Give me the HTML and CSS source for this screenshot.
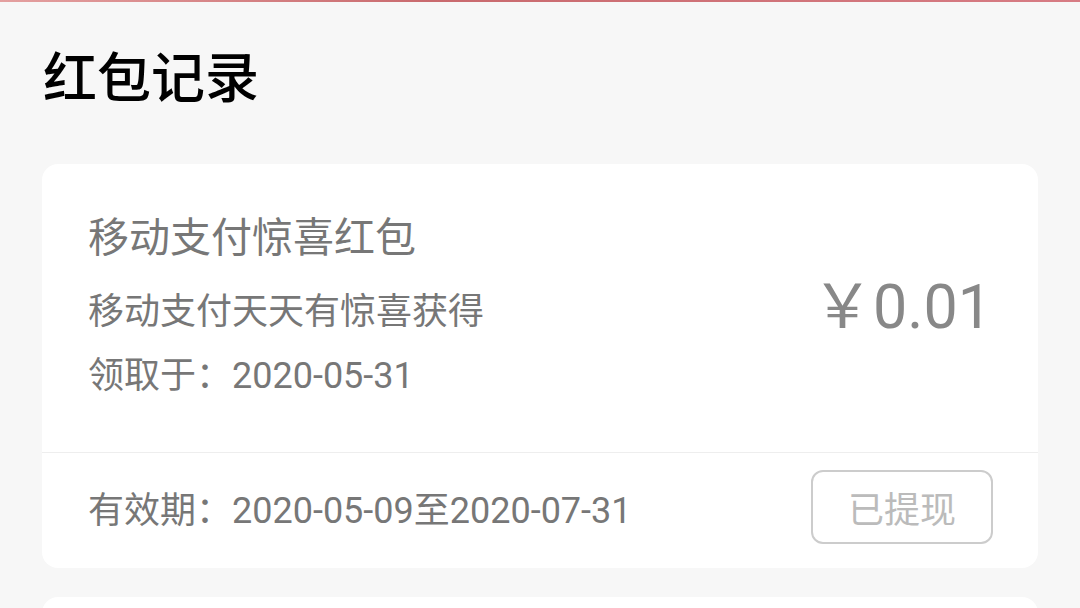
FILE: index.html
```html
<!DOCTYPE html>
<html lang="zh-CN">
<head>
    <meta charset="UTF-8">
    <title>红包记录</title>
    <link rel="stylesheet" href="styles.css">
</head>
<body>
<div class="topline"></div>
<div class="page">
    <h1 class="head">红包记录</h1>
    <div class="list">
        <div class="card">
            <div class="card-top">
                <div class="info">
                    <p class="name">移动支付惊喜红包</p>
                    <p class="desc">移动支付天天有惊喜获得</p>
                    <p class="date">领取于：2020-05-31</p>
                </div>
                <div class="money">￥0.01</div>
            </div>
            <div class="card-bottom">
                <span class="valid">有效期：2020-05-09至2020-07-31</span>
                <span class="btn">已提现</span>
            </div>
        </div>
        <!-- 下一条记录，只露出顶部 -->
        <div class="card card-next"></div>
    </div>
</div>
</body>
</html>
```

FILE: styles.css
```css
*{
    margin:0;
    padding:0;
    box-sizing:border-box;
}
body{
    background:#f7f7f7;
    font-family:Roboto, "Noto Sans CJK SC", sans-serif;
    overflow:hidden;
}
.topline{
    height:2px;
    background:linear-gradient(to right, #e4a0a0, #c96a6e 40%, #d77c84);
}
.page{
    padding:0 42px;
}
.head{
    font-size:54px;
    font-weight:500;
    color:#000;
    line-height:60px;
    padding:48px 0 0 1px;
    height:162px;
}
.list{
    display:flex;
    flex-direction:column;
    gap:29px;
}
.card{
    background:#fff;
    border-radius:16px;
}
.card-next{
    height:120px;
}
.card-top{
    display:flex;
    justify-content:space-between;
    align-items:center;
    padding:38px 46px 50px 46px;
    border-bottom:1px solid #eee;
}
.info p{
    color:#777;
}
.name{
    font-size:41px;
    line-height:72px;
}
.desc{
    font-size:36px;
    line-height:76px;
}
.date{
    font-size:36px;
    line-height:52px;
}
.money{
    font-size:61px;
    color:#888;
    margin-top:-2px;
}
.card-bottom{
    display:flex;
    justify-content:space-between;
    align-items:center;
    height:115px;
    padding:0 45px 8px 46px;
}
.valid{
    font-size:36px;
    color:#777;
}
.btn{
    width:182px;
    height:74px;
    border:2px solid #ccc;
    border-radius:12px;
    color:#bbb;
    font-size:36px;
    display:flex;
    align-items:center;
    justify-content:center;
}
```
